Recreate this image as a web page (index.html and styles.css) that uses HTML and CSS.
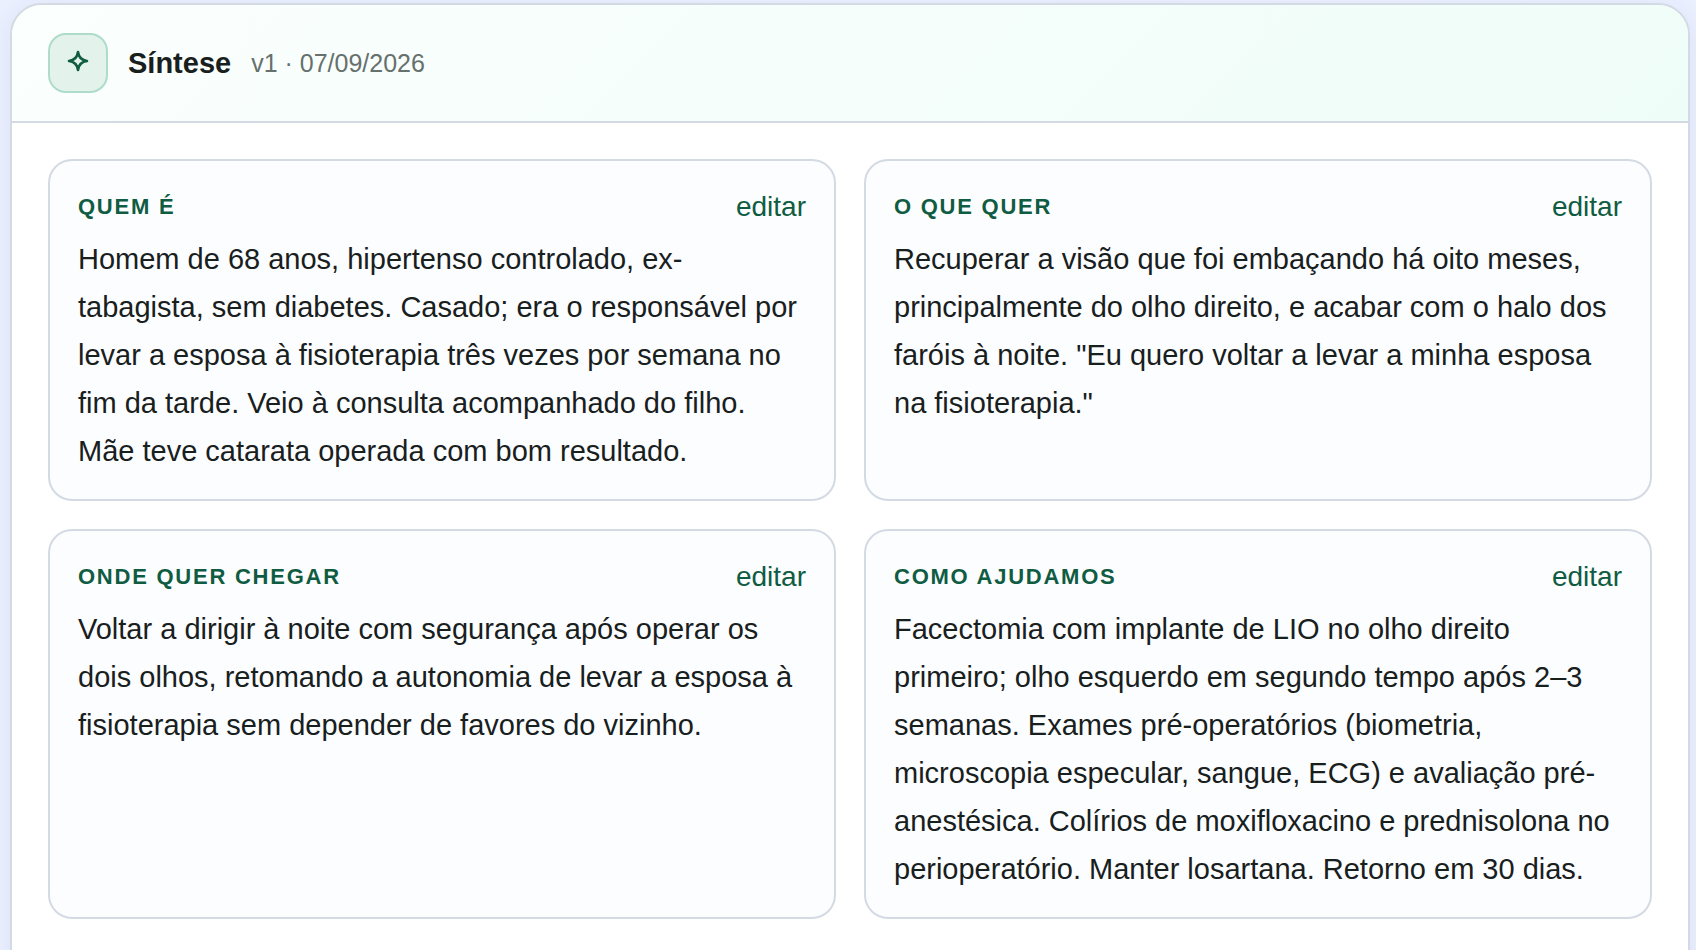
FILE: index.html
```html
<!DOCTYPE html>
<html lang="pt-BR">
<head>
    <meta charset="UTF-8">
    <meta name="viewport" content="width=device-width, initial-scale=1.0">
    <title>Síntese</title>
    <link rel="stylesheet" href="styles.css">
</head>
<body>
    <main class="panel">
        <header class="panel-header">
            <span class="panel-icon">
                <svg viewBox="0 0 24 24" width="24" height="24" fill="none" stroke="currentColor" stroke-width="2.6" stroke-linejoin="round" aria-hidden="true">
                    <path d="M12 3 Q13 11 21 12 Q13 13 12 21 Q11 13 3 12 Q11 11 12 3 Z"/>
                </svg>
            </span>
            <h1>Síntese</h1>
            <span class="meta">v1 · 07/09/2026</span>
        </header>

        <div class="grid">
            <section class="card">
                <div class="card-head">
                    <h2>Quem é</h2>
                    <button type="button" class="edit">editar</button>
                </div>
                <p>Homem de 68 anos, hipertenso controlado, ex-tabagista, sem diabetes. Casado; era o responsável por levar a esposa à fisioterapia três vezes por semana no fim da tarde. Veio à consulta acompanhado do filho. Mãe teve catarata operada com bom resultado.</p>
            </section>

            <section class="card">
                <div class="card-head">
                    <h2>O que quer</h2>
                    <button type="button" class="edit">editar</button>
                </div>
                <p>Recuperar a visão que foi embaçando há oito meses, principalmente do olho direito, e acabar com o halo dos faróis à noite. "Eu quero voltar a levar a minha esposa na fisioterapia."</p>
            </section>

            <section class="card">
                <div class="card-head">
                    <h2>Onde quer chegar</h2>
                    <button type="button" class="edit">editar</button>
                </div>
                <p>Voltar a dirigir à noite com segurança após operar os dois olhos, retomando a autonomia de levar a esposa à fisioterapia sem depender de favores do vizinho.</p>
            </section>

            <section class="card">
                <div class="card-head">
                    <h2>Como ajudamos</h2>
                    <button type="button" class="edit">editar</button>
                </div>
                <p>Facectomia com implante de LIO no olho direito primeiro; olho esquerdo em segundo tempo após 2–3 semanas. Exames pré-operatórios (biometria, microscopia especular, sangue, ECG) e avaliação pré-anestésica. Colírios de moxifloxacino e prednisolona no perioperatório. Manter losartana. Retorno em 30 dias.</p>
            </section>
        </div>
    </main>
</body>
</html>
```
FILE: styles.css
```css
* {
    box-sizing: border-box;
}
body {
    margin: 0;
    padding: 3px 6px 24px 10px;
    font-family: "Liberation Sans", Helvetica, Arial, sans-serif;
    font-size: 28px;
    color: #18201d;
    background-color: #ebf0ff;
}
h1, h2, p {
    margin: 0;
}
.panel {
    padding-bottom: 36px;
    background-color: #fff;
    border: 2px solid #d4dae4;
    border-radius: 32px;
    box-shadow: 0 4px 24px rgba(60, 70, 140, 0.08);
    overflow: hidden;
}
.panel-header {
    display: flex;
    align-items: center;
    gap: 20px;
    padding: 28px 36px;
    border-bottom: 2px solid #d4dae4;
    background: linear-gradient(135deg, #fbfffe, #effdf8);
}
.panel-icon {
    display: flex;
    align-items: center;
    justify-content: center;
    width: 60px;
    height: 60px;
    padding-bottom: 4px;
    color: #0f5c42;
    background-color: #e4f2ec;
    border: 2px solid #aedccb;
    border-radius: 18px;
}
h1 {
    font-size: 29px;
}
.meta {
    font-size: 25px;
    color: #66706c;
}
.grid {
    display: grid;
    grid-template-columns: 1fr 1fr;
    gap: 28px;
    padding: 36px;
}
.card {
    padding: 30px 28px 24px;
    background-color: #fcfdff;
    border: 2px solid #d4dae4;
    border-radius: 24px;
}
.card-head {
    display: flex;
    align-items: center;
    justify-content: space-between;
    margin-bottom: 12px;
}
h2 {
    font-size: 22px;
    letter-spacing: 0.08em;
    text-transform: uppercase;
    color: #0f5c42;
}
.edit {
    padding: 0;
    border: none;
    background: none;
    font: inherit;
    color: #0f5c42;
    cursor: pointer;
}
.card p {
    font-size: 29px;
    line-height: 48px;
}
```
